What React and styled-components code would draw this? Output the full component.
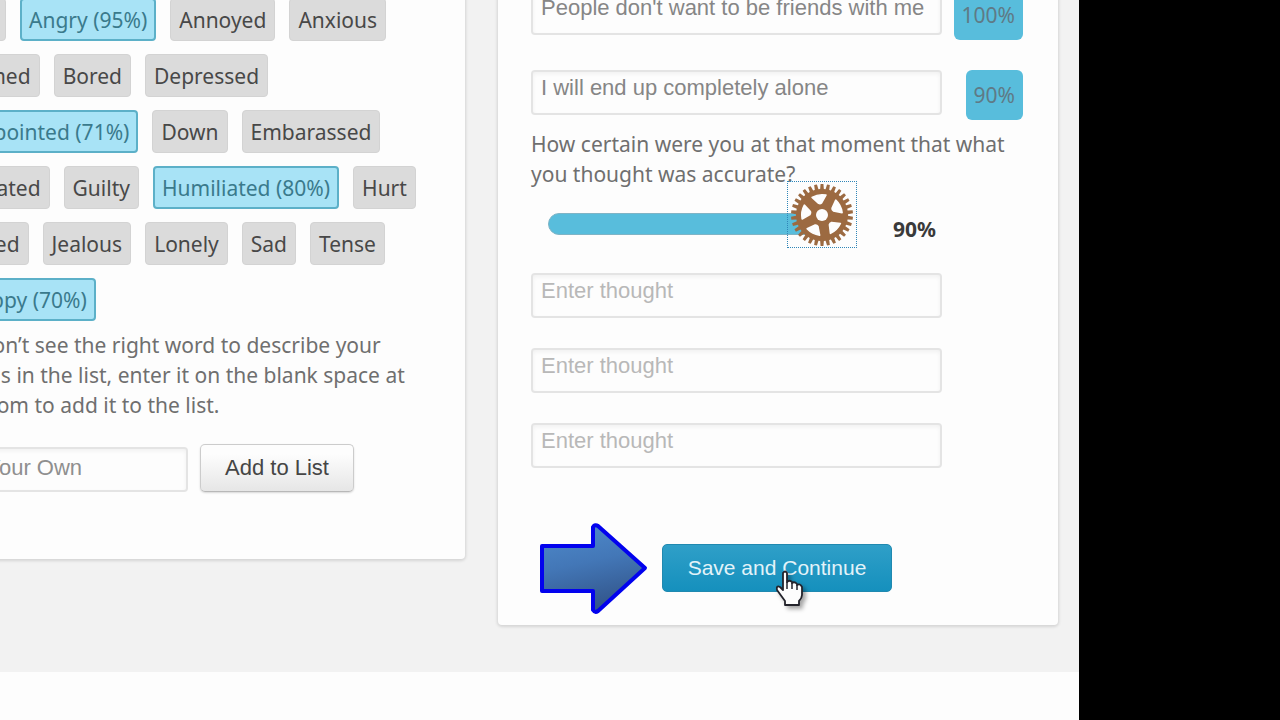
import { useState } from "react";
import styled, { createGlobalStyle } from "styled-components";

const emotions = [
        { name: `Afraid` },
        { name: `Angry`, rate: 95 },
        { name: `Annoyed` },
        { name: `Anxious` },
        { name: `Ashamed` },
        { name: `Bored` },
        { name: `Depressed` },
        { name: `Disappointed`, rate: 71 },
        { name: `Down` },
        { name: `Embarassed` },
        { name: `Frustrated` },
        { name: `Guilty` },
        { name: `Humiliated`, rate: 80 },
        { name: `Hurt` },
        { name: `Irritated` },
        { name: `Jealous` },
        { name: `Lonely` },
        { name: `Sad` },
        { name: `Tense` },
        { name: `Unhappy`, rate: 70 }
];

export default function App() {
        const [certainty, setCertainty] = useState(90);

        return (
                <>
                        <GlobalStyle />
                        <Stage>
                                <Screen>
                                        <Columns>
                                                <EmotionPanel>
                                                        <EmotionList>
                                                                {emotions.map(emotion => (
                                                                        <li key={emotion.name}>
                                                                                <Emotion type="button" $selected={Boolean(emotion.rate)}>
                                                                                        {emotion.rate ? `${emotion.name} (${emotion.rate}%)` : emotion.name}
                                                                                </Emotion>
                                                                        </li>
                                                                ))}
                                                        </EmotionList>
                                                        <Text>
                                                                If you don’t see the right word to describe your emotions in the list, enter it on the blank space at the bottom to add it to the list.
                                                        </Text>
                                                        <AddForm>
                                                                <OwnInput aria-label="Enter Your Own" placeholder="Enter Your Own" />
                                                                <AddButton type="button">Add to List</AddButton>
                                                        </AddForm>
                                                </EmotionPanel>

                                                <ThoughtPanel>
                                                        <RatedThoughts>
                                                                <RatedThought>
                                                                        <ThoughtInput aria-label="Thought 1" defaultValue="People don't want to be friends with me" />
                                                                        <Badge>100%</Badge>
                                                                </RatedThought>
                                                                <RatedThought>
                                                                        <ThoughtInput aria-label="Thought 2" defaultValue="I will end up completely alone" />
                                                                        <Badge>{certainty}%</Badge>
                                                                </RatedThought>
                                                        </RatedThoughts>
                                                        <QuestionLabel htmlFor="certainty">
                                                                How certain were you at that moment that what you thought was accurate?
                                                        </QuestionLabel>
                                                        <SliderRow>
                                                                <Slider>
                                                                        <Fill style={{ width: `${certainty}%` }} />
                                                                        <Handle style={{ left: `${certainty}%` }}>
                                                                                <Gear />
                                                                        </Handle>
                                                                        <Range
                                                                                id="certainty"
                                                                                type="range"
                                                                                min="0"
                                                                                max="100"
                                                                                value={certainty}
                                                                                onChange={e => setCertainty(Number(e.target.value))}
                                                                        />
                                                                </Slider>
                                                                <Certainty htmlFor="certainty">{certainty}%</Certainty>
                                                        </SliderRow>
                                                        <EmptyThoughts>
                                                                {[3, 4, 5].map(number => (
                                                                        <ThoughtInput key={number} aria-label={`Thought ${number}`} placeholder="Enter thought" />
                                                                ))}
                                                        </EmptyThoughts>
                                                        <Actions>
                                                                <Arrow />
                                                                <SaveArea>
                                                                        <SaveButton type="button">Save and Continue</SaveButton>
                                                                        <Pointer>
                                                                                <Hand />
                                                                        </Pointer>
                                                                </SaveArea>
                                                        </Actions>
                                                </ThoughtPanel>
                                        </Columns>
                                </Screen>
                        </Stage>
                </>
        );
}

function Gear() {
        const teeth = 30;
        const points = [];
        for (let i = 0; i < teeth; i++) {
                [[-0.34, 26], [-0.22, 31], [0.22, 31], [0.34, 26]].forEach(([shift, radius]) => {
                        const angle = ((i + shift) / teeth) * Math.PI * 2;
                        points.push(`${(radius * Math.sin(angle)).toFixed(2)},${(-radius * Math.cos(angle)).toFixed(2)}`);
                });
        }

        return (
                <svg width="64" height="64" viewBox="-32 -32 64 64" aria-hidden="true">
                        <polygon points={points.join(` `)} fill="#9c6a41" />
                        {[-9, 63, 135, 207, 279].map(turn => (
                                <path
                                        key={turn}
                                        d="M-7 -19 Q0 -21.5 7 -19 L1.5 -12 Q0 -11 -1.5 -12 Z"
                                        transform={`rotate(${turn})`}
                                        fill="#fdfdfd"
                                        stroke="#fdfdfd"
                                        strokeWidth="1.6"
                                        strokeLinejoin="round"
                                />
                        ))}
                        <circle r="6" fill="#fdfdfd" />
                </svg>
        );
}

function Arrow() {
        return (
                <svg width="120" height="98" viewBox="0 0 120 98" aria-hidden="true">
                        <defs>
                                <linearGradient id="arrowFill" x1="0" y1="0" x2="0.25" y2="1">
                                        <stop offset="0" stopColor="#4f8bcd" />
                                        <stop offset="0.5" stopColor="#4377b7" />
                                        <stop offset="1" stopColor="#33578d" />
                                </linearGradient>
                        </defs>
                        <path
                                d="M11 27 H62 V8 Q64 5 67 7 L114 49 L67 92 Q64 94 62 91 V72 H11 Z"
                                fill="url(#arrowFill)"
                                stroke="#0202ee"
                                strokeWidth="4"
                                strokeLinejoin="round"
                        />
                </svg>
        );
}

function Hand() {
        return (
                <svg width="30" height="38" viewBox="0 0 30 38" aria-hidden="true">
                        <path
                                d="M8 3 Q10 0 12 3 V12 Q14.5 9.5 17 12 V13 Q19.5 11 22 14 V15 Q25 13 27 17 V25 Q27 28 24 31 V35 H10 V31 L2 20 Q1 15 5 17 L8 20 Z"
                                fill="#fdfdfd"
                                stroke="#23232b"
                                strokeWidth="1.8"
                                strokeLinejoin="round"
                        />
                        <path d="M12 12 V19 M17 13 V19 M22 15 V20" fill="none" stroke="#23232b" strokeWidth="1.5" />
                </svg>
        );
}

const GlobalStyle = createGlobalStyle`
        *{
                box-sizing: border-box;
        }
        body{
                margin: 0;
                background: #000000;
        }
        button, input{
                font-family: "Liberation Sans", Arial, sans-serif;
        }
`

const Stage = styled.div`
        min-height: 100vh;
        padding-right: 201px;
        display: flex;
        overflow: hidden;
        background: #000000;
        font-family: "Noto Sans", sans-serif;
`

/* the page is scrolled a little down and to the right */
const Screen = styled.main`
        flex: 1;
        min-width: 0;
        overflow: hidden;
        background: #fdfdfd;
`

const Columns = styled.div`
        display: grid;
        grid-template-columns: 1fr 1fr;
        gap: 33px;
        align-items: start;
        margin: -20px 0 0 -95px;
        padding: 0 21px 47px 0;
        background: #f2f2f2;
`

const Panel = styled.section`
        background: #fdfdfd;
        border-radius: 4px;
        box-shadow: 0 1px 3px 1px rgba(0, 0, 0, 0.12);
`

const EmotionPanel = styled(Panel)`
        padding: 18px 32px 67px 13px;
`

const ThoughtPanel = styled(Panel)`
        padding: 10px 35px 8px 33px;
`

const EmotionList = styled.ul`
        display: flex;
        flex-wrap: wrap;
        gap: 13px 14px;
        margin: 0 0 9px 0;
        padding: 0 0 0 11px;
        list-style: none;
`

const Emotion = styled.button`
        height: 43px;
        padding: 0 ${props => (props.$selected ? `7px` : `8px`)};
        font-family: "Noto Sans", sans-serif;
        font-size: 21px;
        color: ${props => (props.$selected ? `#3a7a8c` : `#484848`)};
        background: ${props => (props.$selected ? `#a8e3f6` : `#dbdbdb`)};
        border: ${props => (props.$selected ? `2px solid #5cb0c8` : `1px solid #d3d3d3`)};
        border-radius: 4px;
        cursor: pointer;
`

const Text = styled.p`
        margin: 0;
        font-size: 21px;
        line-height: 30px;
        color: #6f6f6f;
`

const AddForm = styled.div`
        display: flex;
        align-items: flex-end;
        gap: 12px;
        margin-top: 24px;
`

const Field = styled.input`
        height: 45px;
        font-size: 22px;
        color: #868686;
        background: #fdfdfd;
        border: 2px solid #e4e4e4;
        border-radius: 4px;
        box-shadow: inset 0 2px 4px rgba(0, 0, 0, 0.05);
        outline: none;
`

const OwnInput = styled(Field)`
        width: 270px;
        padding: 0 8px 3px 8px;
        &::placeholder{
                color: #8f8f8f;
        }
`

const ThoughtInput = styled(Field)`
        width: 411px;
        padding: 0 8px 10px 8px;
        &::placeholder{
                color: #b8b8b8;
        }
`

const AddButton = styled.button`
        width: 154px;
        height: 48px;
        padding: 0;
        font-size: 22px;
        color: #454545;
        background: linear-gradient(#fdfdfd 20%, #e6e6e6);
        border: 1px solid #cccccc;
        border-bottom-color: #b8b8b8;
        border-radius: 5px;
        box-shadow: 0 1px 2px rgba(0, 0, 0, 0.15);
`

const RatedThoughts = styled.div`
        display: flex;
        flex-direction: column;
        gap: 30px;
`

const RatedThought = styled.div`
        display: flex;
        justify-content: space-between;
        height: 50px;
`

const Badge = styled.span`
        display: flex;
        align-items: center;
        padding: 0 8px;
        font-size: 21px;
        color: #5f7a86;
        background: #58bddc;
        border-radius: 6px;
`

const QuestionLabel = styled.label`
        display: block;
        margin-top: 9px;
        font-size: 21px;
        line-height: 30px;
        color: #6f6f6f;
`

const SliderRow = styled.div`
        display: flex;
        align-items: center;
        gap: 41px;
        height: 70px;
        padding-left: 17px;
`

const Slider = styled.div`
        position: relative;
        width: 304px;
        height: 22px;
`

const Fill = styled.div`
        height: 100%;
        background: #58bddc;
        border: 1px solid #7fb4c6;
        border-radius: 11px 0 0 11px;
`

const Handle = styled.div`
        position: absolute;
        top: -32px;
        width: 70px;
        height: 67px;
        display: flex;
        align-items: center;
        justify-content: center;
        border: 1px dotted #2f86b8;
        transform: translateX(-50%);
`

const Range = styled.input`
        position: absolute;
        inset: 0;
        width: 100%;
        height: 100%;
        margin: 0;
        opacity: 0;
        cursor: pointer;
`

const Certainty = styled.label`
        padding-top: 10px;
        font-size: 21px;
        font-weight: 700;
        color: #3a3a3a;
`

const EmptyThoughts = styled.div`
        display: flex;
        flex-direction: column;
        gap: 30px;
        margin-top: 14px;
`

const Actions = styled.div`
        display: flex;
        align-items: center;
        gap: 11px;
        margin-top: 51px;
`

const SaveArea = styled.div`
        position: relative;
`

const SaveButton = styled.button`
        width: 230px;
        height: 48px;
        padding: 0;
        font-size: 21px;
        color: #e3f3f9;
        background: linear-gradient(#2f9fc8, #1590bd);
        border: 1px solid #2089b0;
        border-radius: 5px;
`

const Pointer = styled.div`
        position: absolute;
        left: 113px;
        top: 26px;
        pointer-events: none;
        filter: drop-shadow(3px 3px 2px rgba(0, 0, 0, 0.35));
`
